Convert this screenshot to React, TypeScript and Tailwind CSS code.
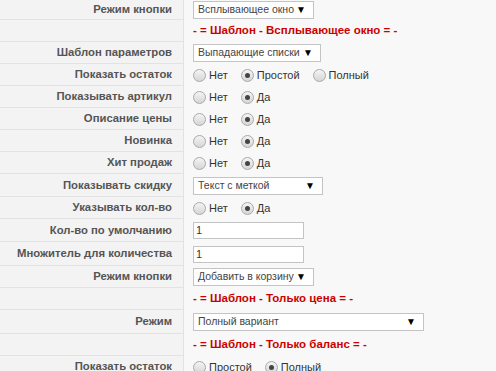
const font = { fontFamily: '"Liberation Sans", Arial, sans-serif' };

type Row =
  | { kind: 'select'; label: string; value: string; w: string; h?: string }
  | { kind: 'radio'; label: string; options: string[]; checked: number; h?: string }
  | { kind: 'input'; label: string; value: string; h?: string }
  | { kind: 'head'; text: string; h?: string };

const rows: Row[] = [
  { kind: 'select', label: 'Режим кнопки', value: 'Всплывающее окно', w: 'w-[121px]', h: 'h-[20px]' },
  { kind: 'head', text: '- = Шаблон - Всплывающее окно = -' },
  { kind: 'select', label: 'Шаблон параметров', value: 'Выпадающие списки', w: 'w-[128px]' },
  { kind: 'radio', label: 'Показать остаток', options: ['Нет', 'Простой', 'Полный'], checked: 1 },
  { kind: 'radio', label: 'Показывать артикул', options: ['Нет', 'Да'], checked: 1 },
  { kind: 'radio', label: 'Описание цены', options: ['Нет', 'Да'], checked: 1 },
  { kind: 'radio', label: 'Новинка', options: ['Нет', 'Да'], checked: 1 },
  { kind: 'radio', label: 'Хит продаж', options: ['Нет', 'Да'], checked: 1 },
  { kind: 'select', label: 'Показывать скидку', value: 'Текст с меткой', w: 'w-[130px]', h: 'h-[23px]' },
  { kind: 'radio', label: 'Указывать кол-во', options: ['Нет', 'Да'], checked: 1 },
  { kind: 'input', label: 'Кол-во по умолчанию', value: '1', h: 'h-[23px]' },
  { kind: 'input', label: 'Множитель для количества', value: '1', h: 'h-[24px]' },
  { kind: 'select', label: 'Режим кнопки', value: 'Добавить в корзину', w: 'w-[121px]' },
  { kind: 'head', text: '- = Шаблон - Только цена = -' },
  { kind: 'select', label: 'Режим', value: 'Полный вариант', w: 'w-[231px]', h: 'h-[24px]' },
  { kind: 'head', text: '- = Шаблон - Только баланс = -' },
  { kind: 'radio', label: 'Показать остаток', options: ['Простой', 'Полный'], checked: 1, h: 'h-[22px]' },
];

function Radio({ on }: { on: boolean }) {
  return (
    <span className="flex h-[13px] w-[13px] shrink-0 items-center justify-center rounded-full border border-[#a9a9a9] bg-gradient-to-b from-[#f4f4f4] to-[#d6d6d6]">
      {on && <span className="h-[5px] w-[5px] rounded-full bg-[#444]" />}
    </span>
  );
}

function Select({ value, w }: { value: string; w: string }) {
  return (
    <div className={`flex h-[18px] ${w} items-center justify-between border border-[#c4c4c4] bg-white pr-[7px] pl-[4px] text-[10.5px] whitespace-nowrap text-[#444]`}>
      <span>{value}</span>
      <span className="text-[10px] leading-none text-black">▼</span>
    </div>
  );
}

function Right({ row }: { row: Row }) {
  if (row.kind === 'select') return <Select value={row.value} w={row.w} />;
  if (row.kind === 'input')
    return (
      <div className="flex h-[17px] w-[111px] items-center border border-[#c4c4c4] bg-white pl-[2px] text-[11px] text-[#333]">
        {row.value}
      </div>
    );
  if (row.kind === 'head')
    return <div className="text-[11.5px] font-bold whitespace-nowrap text-[#cc0000]">{row.text}</div>;
  return (
    <div className="flex items-center gap-[13px] text-[11px] whitespace-nowrap text-[#333]">
      {row.options.map((o, i) => (
        <label key={o} className="flex items-center gap-[3px]">
          <Radio on={i === row.checked} />
          <span>{o}</span>
        </label>
      ))}
    </div>
  );
}

export default function App() {
  return (
    <div className="h-[371px] w-[496px] overflow-hidden bg-[#f8f8f8]" style={font}>
      {rows.map((row, i) => (
        <div key={i} className={`grid grid-cols-[184px_1fr] ${row.h ?? 'h-[22px]'}`}>
          <div className="flex items-center justify-end border-r border-b border-[#e2e2e2] bg-[#f3f3f3] pr-[11px] text-[11.3px] font-bold whitespace-nowrap text-[#555]">
            {'label' in row ? row.label : ''}
          </div>
          <div className="flex items-center pl-[9px]">
            <Right row={row} />
          </div>
        </div>
      ))}
    </div>
  );
}
